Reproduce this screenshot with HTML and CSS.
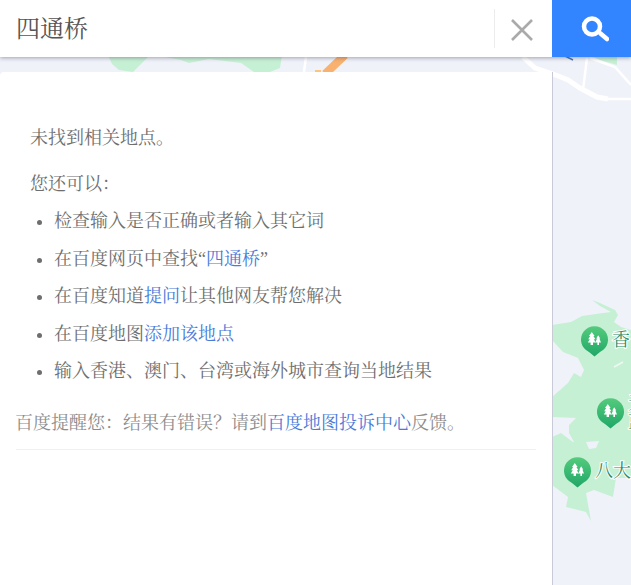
FILE: index.html
```html
<!DOCTYPE html>
<html lang="zh-CN">
<head>
<meta charset="utf-8">
<title>四通桥</title>
<link rel="stylesheet" href="styles.css">
</head>
<body>
<div class="map">
  <svg class="map-art" width="631" height="585" viewBox="0 0 631 585">
    <defs>
      <linearGradient id="pinfill" x1="0" y1="0" x2="0" y2="1">
        <stop offset="0" stop-color="#55cb7d"/>
        <stop offset="1" stop-color="#1fa767"/>
      </linearGradient>
      <g id="pin">
        <path fill="url(#pinfill)" d="M0 17.500 L-5.500 13 A13.500 13.500 0 1 1 5.500 13Z"/>
        <path class="tree" transform="translate(.5 -.5) scale(.8)" d="M-4 -8 L-.5 -3 -2 -3 .5 1 -1.500 1 1 5 -2.500 5 -2.500 8 -5.500 8 -5.500 5 -9 5 -6.500 1 -8.500 1 -6 -3 -7.500 -3Z M4 -4 L6.500 0 5.500 0 7.500 5 5 5 5 8 3 8 3 5 .5 5 2.500 0 1.500 0Z"/>
      </g>
    </defs>
    <g class="land">
      <path d="M108 55 L112 64 119 70 133 72 150 55Z"/>
      <path d="M155 55 L181 60 189 63 209 59 241 63 254 72 270 72 280 68 282 55Z"/>
      <path d="M590 55 L617 55 617 65 600 60Z"/>
      <path d="M552 325 L571 322 582 316 603 313 611 312 600 306 592 300 600 303 615 310 618 315 614 322 621 327 631 330 631 478 616 478 613 497 594 490 586 493 591 521 586 512 578 510 566 507 568 497 552 485 552 437 561 433 573 442 586 442 574 442 569 433 569 425 576 418 552 417 552 397 568 383 574 373 581 377 584 370 583 368 578 358 563 352 552 340Z"/>
    </g>
    <path class="pond" d="M586 442 L599 441 596 448 589 449Z"/>
    <path class="gap" d="M614 367 L623 362"/>
    <path class="road-orange" d="M345 55 L325 74"/>
    <rect class="road-orange-box" x="315" y="70" width="6" height="3"/>
    <path class="road-thin" d="M306 57 L304 72"/>
    <path class="road-thin" d="M587 58 L583 90"/>
    <path class="road-thin" d="M590 58 L615 67 631 85"/>
    <path class="road-thin" d="M608 99 H631"/>
    <path class="road-main" d="M523 57 L535 68 553 74 568 80 580 88 597 97 608 99"/>
    <path class="road-blue" d="M565 56 L573 60"/>
    <use href="#pin" x="594.500" y="339"/>
    <use href="#pin" x="610.500" y="411"/>
    <use href="#pin" x="577.500" y="470"/>
    <text class="poi" x="612" y="346">香</text>
    <text class="poi" x="628" y="409">天</text>
    <text class="poi" x="628" y="428">蓝</text>
    <text class="poi" x="595" y="477">八大</text>
  </svg>
</div>
<header class="search">
  <div class="search-box">
    <div class="query">四通桥</div>
    <div class="divider"></div>
    <button class="clear" aria-label="清除">
      <svg width="24" height="24" viewBox="0 0 24 24"><path d="M2 3 L22 23 M22 3 L2 23"/></svg>
    </button>
  </div>
  <button class="go" aria-label="搜索">
    <svg width="34" height="34" viewBox="0 0 34 34"><circle cx="17" cy="14.500" r="8"/><path d="M25.500 21.500 L32 27"/></svg>
  </button>
</header>
<main class="panel">
  <p class="lead">未找到相关地点。</p>
  <p class="sub">您还可以&#xFF1A;</p>
  <ul class="tips">
    <li>检查输入是否正确或者输入其它词</li>
    <li>在百度网页中查找“<a>四通桥</a>”</li>
    <li>在百度知道<a>提问</a>让其他网友帮您解决</li>
    <li>在百度地图<a>添加该地点</a></li>
    <li>输入香港、澳门、台湾或海外城市查询当地结果</li>
  </ul>
  <p class="note">百度提醒您&#xFF1A;结果有错误&#xFF1F;请到<a>百度地图投诉中心</a>反馈。</p>
</main>
</body>
</html>
```
FILE: styles.css
```css
* { box-sizing: border-box; }
html, body { margin: 0; height: 100%; }
body {
  position: relative;
  width: 631px;
  height: 585px;
  overflow: hidden;
  display: flex;
  flex-direction: column;
  background: #f0f2fa;
  font-family: "Liberation Serif", "Noto Serif CJK SC", "Noto Sans CJK SC", serif;
  color: #6e6e6e;
}
.map { position: absolute; inset: 0; }
.map-art { display: block; }
.land path { fill: #c6f0d4; }
.pond { fill: #f0f2fa; }
.gap { fill: none; stroke: #eef8f2; stroke-width: 1.5; }
.road-orange { fill: none; stroke: #f9b16f; stroke-width: 8; }
.road-orange-box { fill: #fbc57e; }
.road-thin { fill: none; stroke: #fff; stroke-width: 2.5; }
.road-main { fill: none; stroke: #fff; stroke-width: 5; }
.road-blue { fill: none; stroke: #4a76b8; stroke-width: 1.5; }
.tree { fill: #fff; }
.poi { font-size: 18px; fill: #2a8b66; stroke: #fff; stroke-width: 2px; paint-order: stroke; }

.search {
  position: relative;
  flex: none;
  display: flex;
  height: 57px;
  box-shadow: 0 1px 4px rgba(60, 60, 80, .45);
}
.search-box {
  flex: 1;
  display: flex;
  align-items: center;
  background: #fff;
  padding: 0 18px 0 16px;
}
.query { flex: 1; font-size: 24px; color: #555; padding-bottom: 4px; }
.divider { width: 1px; height: 39px; background: #ececec; }
.clear { display: flex; border: 0; background: none; padding: 0; margin-left: 15px; }
.clear path { fill: none; stroke: #aaa; stroke-width: 2.6; }
.go {
  flex: none;
  width: 79px;
  border: 0;
  padding: 0;
  display: flex;
  align-items: center;
  justify-content: center;
  background: #3385ff;
}
.go circle, .go path { fill: none; stroke: #fff; }
.go circle { stroke-width: 4.500; }
.go path { stroke-width: 4.500; stroke-linecap: round; }

.panel {
  position: relative;
  flex: 1;
  width: 553px;
  margin-top: 15px;
  padding: 54px 16px 0;
  background: #fff;
  border-right: 1px solid #c9cad8;
  border-radius: 4px 0 0 0;
  font-size: 18px;
  line-height: 24px;
}
.panel p { margin: 0; }
.lead { padding-left: 14px; }
.sub { padding-left: 14px; margin-top: 22px !important; }
.tips { margin: 13px 0 0; padding: 0 0 0 38px; }
.tips li { height: 37.5px; }
.note {
  margin-top: 14px !important;
  padding-bottom: 14px;
  border-bottom: 1px solid #f0f0f0;
  color: #8c8c8c;
  text-indent: -1px;
}
a { color: #4a7bd8; }
```
